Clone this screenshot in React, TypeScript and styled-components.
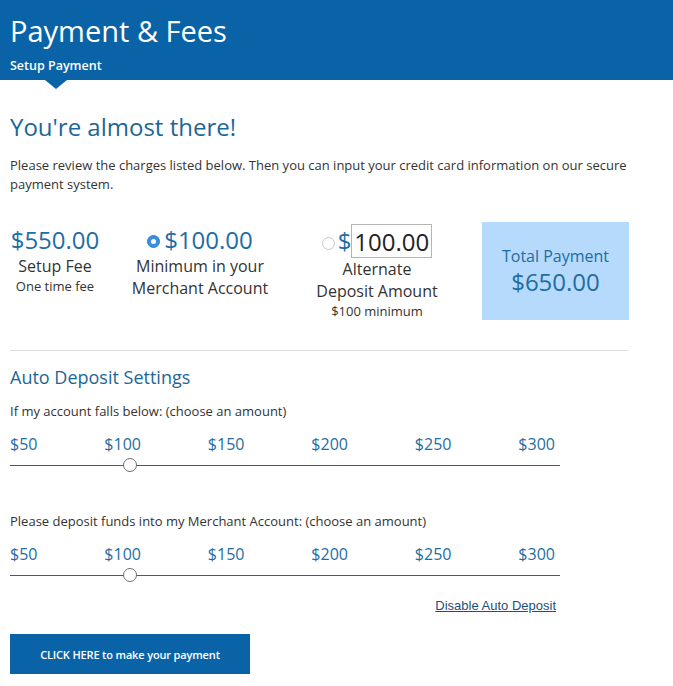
import React from 'react';
import styled, { createGlobalStyle } from 'styled-components';

const BRAND = '#0a63a6';
const ACCENT = '#1e6da3';

const GlobalStyle = createGlobalStyle`
  body {
    margin: 0;
    background: #fff;
    font-family: "Open Sans", "Liberation Sans", sans-serif;
    color: #333;
  }
`;

const AMOUNTS = [50, 100, 150, 200, 250, 300];

function AmountSlider({ prompt, value }: { prompt: string; value: number }) {
  const pct = ((value - 50) / 250) * 100;
  return (
    <SliderBlock>
      <Prompt>{prompt}</Prompt>
      <Ticks>
        {AMOUNTS.map((a) => (
          <Tick key={a}>${a}</Tick>
        ))}
      </Ticks>
      <Track>
        <Thumb style={{ left: `${pct}%` }} />
      </Track>
    </SliderBlock>
  );
}

export default function App() {
  return (
    <>
      <GlobalStyle />
      <Page>
        <Header>
          <HeaderTitle>Payment &amp; Fees</HeaderTitle>
          <HeaderTab>Setup Payment</HeaderTab>
        </Header>

        <Content>
          <Headline>You're almost there!</Headline>
          <Intro>
            Please review the charges listed below. Then you can input your credit card information on our secure
            payment system.
          </Intro>

          <ChargesRow>
            <Charge $width={90} $top={3}>
              <Amount>$550.00</Amount>
              <Label>Setup Fee</Label>
              <Note>One time fee</Note>
            </Charge>

            <Charge $width={140} $offset={30} $top={3}>
              <Amount>
                <Radio $checked />
                $100.00
              </Amount>
              <Label>
                Minimum in your
                <br />
                Merchant Account
              </Label>
            </Charge>

            <Charge $width={130} $offset={42} $top={2}>
              <AltLine>
                <Radio />
                <Dollar>$</Dollar>
                <AltInput defaultValue="100.00" />
              </AltLine>
              <Label>
                Alternate
                <br />
                Deposit Amount
              </Label>
              <Note>$100 minimum</Note>
            </Charge>

            <TotalBox>
              <Label $accent>Total Payment</Label>
              <Amount>$650.00</Amount>
            </TotalBox>
          </ChargesRow>

          <Rule />

          <SectionTitle>Auto Deposit Settings</SectionTitle>
          <AmountSlider prompt="If my account falls below: (choose an amount)" value={100} />
          <AmountSlider prompt="Please deposit funds into my Merchant Account: (choose an amount)" value={100} />

          <LinkRow>
            <TextLink href="#">Disable Auto Deposit</TextLink>
          </LinkRow>

          <PayButton>CLICK HERE to make your payment</PayButton>
        </Content>
      </Page>
    </>
  );
}

const Page = styled.div`
  width: 673px;
  min-height: 686px;
`;

const Header = styled.header`
  position: relative;
  box-sizing: border-box;
  height: 80px;
  padding: 11px 10px 0;
  background: ${BRAND};
  color: #fff;

  &::after {
    content: '';
    position: absolute;
    left: 45px;
    top: 100%;
    border-left: 11px solid transparent;
    border-right: 11px solid transparent;
    border-top: 9px solid ${BRAND};
  }
`;

const HeaderTitle = styled.h1`
  margin: 0;
  font-size: 29px;
  line-height: 40px;
  font-weight: 400;
`;

const HeaderTab = styled.div`
  margin-top: 6px;
  font-size: 12.5px;
  line-height: 18px;
  font-weight: 600;
`;

const Content = styled.main`
  width: 620px;
  padding-left: 10px;
`;

const Headline = styled.h2`
  margin: 31px 0 0;
  font-size: 24px;
  line-height: 32px;
  font-weight: 400;
  color: #1c6796;
`;

const Intro = styled.p`
  width: 640px;
  margin: 13px 0 0;
  font-size: 13px;
  line-height: 19px;
  color: #333;
`;

const ChargesRow = styled.div`
  display: flex;
  align-items: flex-start;
  margin-top: 28px;
`;

const Charge = styled.div<{ $width: number; $offset?: number; $top?: number }>`
  width: ${(p) => p.$width}px;
  margin-left: ${(p) => p.$offset ?? 0}px;
  padding-top: ${(p) => p.$top ?? 0}px;
  display: flex;
  flex-direction: column;
  align-items: center;
  text-align: center;
  white-space: nowrap;
`;

const Amount = styled.div`
  display: flex;
  align-items: center;
  font-size: 24px;
  line-height: 30px;
  color: ${ACCENT};
`;

const Label = styled.div<{ $accent?: boolean }>`
  font-size: 16px;
  line-height: 22px;
  color: ${(p) => (p.$accent ? ACCENT : '#333')};
`;

const Note = styled.div`
  font-size: 13px;
  line-height: 18px;
  color: #333;
`;

const Radio = styled.span<{ $checked?: boolean }>`
  position: relative;
  box-sizing: border-box;
  width: 13px;
  height: 13px;
  margin-right: ${(p) => (p.$checked ? 4 : 3)}px;
  margin-top: ${(p) => (p.$checked ? 2 : 4)}px;
  border-radius: 50%;
  background: ${(p) => (p.$checked ? '#3c8fe0' : '#fff')};
  border: 1px solid ${(p) => (p.$checked ? '#2f7fd0' : '#c8c8c8')};

  &::after {
    content: '';
    display: ${(p) => (p.$checked ? 'block' : 'none')};
    position: absolute;
    left: 3px;
    top: 3px;
    width: 5px;
    height: 5px;
    border-radius: 50%;
    background: #fff;
  }
`;

const AltLine = styled.div`
  display: flex;
  align-items: center;
  height: 34px;
`;

const Dollar = styled.span`
  font-size: 24px;
  line-height: 30px;
  color: ${ACCENT};
`;

const AltInput = styled.input`
  box-sizing: border-box;
  width: 81px;
  height: 34px;
  padding: 0 2px;
  border: 1px solid #b5b5b5;
  font-family: "Open Sans", "Liberation Sans", sans-serif;
  font-size: 24px;
  color: #222;
  background: #fff;
  outline: none;
`;

const TotalBox = styled.div`
  box-sizing: border-box;
  width: 147px;
  height: 98px;
  margin-left: 40px;
  display: flex;
  flex-direction: column;
  align-items: center;
  justify-content: center;
  background: #b5dafb;
`;

const Rule = styled.hr`
  width: 618px;
  margin: 30px 0 0;
  border: none;
  border-top: 1px solid #dcdcdc;
`;

const SectionTitle = styled.h3`
  margin: 14px 0 0;
  font-size: 18px;
  line-height: 24px;
  font-weight: 400;
  color: #1c6796;
`;

const SliderBlock = styled.div`
  margin-top: 13px;

  & + & {
    margin-top: 40px;
  }
`;

const Prompt = styled.div`
  font-size: 13px;
  line-height: 18px;
  color: #333;
`;

const Ticks = styled.div`
  width: 545px;
  margin-top: 13px;
  display: flex;
  justify-content: space-between;
`;

const Tick = styled.span`
  font-size: 16px;
  line-height: 22px;
  color: ${ACCENT};
`;

const Track = styled.div`
  position: relative;
  width: 550px;
  height: 14px;
  margin-top: 3px;

  &::before {
    content: '';
    position: absolute;
    left: 0;
    right: 0;
    top: 7px;
    height: 1px;
    background: #2a6580;
  }
`;

const Thumb = styled.span`
  position: absolute;
  top: 0;
  margin-left: 3px;
  box-sizing: border-box;
  width: 14px;
  height: 14px;
  border-radius: 50%;
  border: 1.5px solid #6f6f6f;
  background: #fff;
`;

const LinkRow = styled.div`
  width: 546px;
  margin-top: 16px;
  text-align: right;
  font-family: "Liberation Sans", Arial, sans-serif;
  font-size: 13px;
  line-height: 16px;
`;

const TextLink = styled.a`
  color: #1d4f7c;
  text-decoration: underline;
`;

const PayButton = styled.button`
  display: block;
  width: 240px;
  height: 40px;
  margin-top: 20px;
  border: none;
  background: ${BRAND};
  color: #fff;
  font-family: "Open Sans", "Liberation Sans", sans-serif;
  font-size: 11px;
  font-weight: 600;
  letter-spacing: -0.15px;
  cursor: pointer;
`;
